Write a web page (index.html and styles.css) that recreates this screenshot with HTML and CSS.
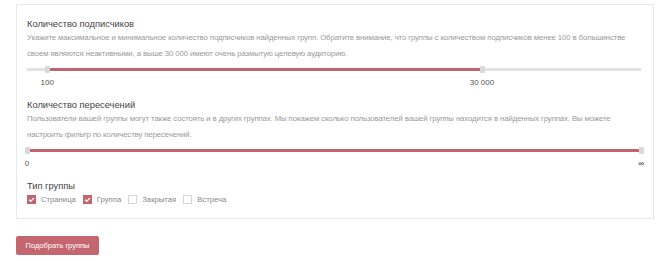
FILE: index.html
```html
<!DOCTYPE html>
<html lang="ru">

<head>
  <meta charset="UTF-8">
  <title>Подбор групп</title>
  <link rel="stylesheet" href="styles.css">
</head>

<body>

  <div class="panel">

    <div class="filter">
      <div class="filter__title">Количество подписчиков</div>
      <div class="filter__hint">Укажите максимальное и минимальное количество подписчиков найденных групп. Обратите внимание, что группы с количеством подписчиков менее 100 в большинстве своем являются неактивными, а выше 30 000 имеют очень размытую целевую аудиторию.</div>
      <div class="slider">
        <div class="slider__track">
          <div class="slider__fill" style="left: 3.3%; width: 70.8%;"></div>
        </div>
        <span class="slider__handle" style="left: 3.3%;"></span>
        <span class="slider__handle" style="left: 74.1%;"></span>
      </div>
      <div class="slider__labels">
        <span style="left: 3.3%;">100</span>
        <span style="left: 74.1%;">30 000</span>
      </div>
    </div>

    <div class="filter">
      <div class="filter__title">Количество пересечений</div>
      <div class="filter__hint">Пользователи вашей группы могут также состоять и в других группах. Мы покажем сколько пользователей вашей группы находится в найденных группах. Вы можете настроить фильтр по количеству пересечений.</div>
      <div class="slider">
        <div class="slider__track">
          <div class="slider__fill" style="left: 0; width: 100%;"></div>
        </div>
        <span class="slider__handle" style="left: 0;"></span>
        <span class="slider__handle" style="left: 100%;"></span>
      </div>
      <div class="slider__labels">
        <span style="left: 0;">0</span>
        <span class="inf" style="left: 100%;">&infin;</span>
      </div>
    </div>

    <div class="filter">
      <div class="filter__title">Тип группы</div>
      <div class="types">
        <label class="type"><span class="check checked"><svg viewBox="0 0 10 10" width="9" height="9"><path d="M2.3 5.2 L4.2 7 L7.8 3.2" fill="none" stroke="#fff" stroke-width="1.4"/></svg></span>Страница</label>
        <label class="type"><span class="check checked"><svg viewBox="0 0 10 10" width="9" height="9"><path d="M2.3 5.2 L4.2 7 L7.8 3.2" fill="none" stroke="#fff" stroke-width="1.4"/></svg></span>Группа</label>
        <label class="type"><span class="check"></span>Закрытая</label>
        <label class="type"><span class="check"></span>Встреча</label>
      </div>
    </div>

  </div>

  <button class="btn">Подобрать группы</button>

</body>

</html>
```

FILE: styles.css
```css
body {
  margin: 0;
  padding: 4px 16px 0;
  background-color: #fff;
  font-family: "Liberation Sans", Arial, sans-serif;
  color: #444;
}

.panel {
  border: 1px solid #e8e8e8;
  padding: 13px 12px 12px 10px;
}

.filter {
  margin-bottom: 10px;
}

.filter:last-child {
  margin-bottom: 0;
}

.filter__title {
  font-size: 9.3px;
  line-height: 12px;
  color: #444;
}

.filter__hint {
  font-size: 7.8px;
  letter-spacing: -0.12px;
  line-height: 15.5px;
  color: #9a9a9a;
}

.slider {
  position: relative;
  height: 10px;
  margin-top: 4px;
}

.slider__track {
  position: relative;
  top: 3px;
  height: 3px;
  background-color: #e2e2e2;
}

.slider__fill {
  position: absolute;
  top: 0;
  height: 3px;
  background-color: #c2646d;
}

.slider__handle {
  position: absolute;
  top: 1px;
  width: 5px;
  height: 7px;
  margin-left: -2px;
  background-color: #d9d9d9;
  border-radius: 1px;
}

.slider__labels {
  position: relative;
  height: 13px;
  margin-top: 1px;
  font-size: 8px;
  line-height: 13px;
  color: #555;
}

.slider__labels span {
  position: absolute;
  top: 0;
  transform: translateX(-50%);
  white-space: nowrap;
}

.slider__labels .inf {
  font-size: 8px;
  font-weight: bold;
}

.types {
  display: flex;
  align-items: center;
  gap: 7px;
  margin-top: 1px;
  height: 13px;
  font-size: 7.7px;
  color: #888;
}

.type {
  display: flex;
  align-items: center;
  gap: 5px;
}

.check {
  display: inline-block;
  box-sizing: border-box;
  width: 9px;
  height: 9px;
  border: 1px solid #d6d6d6;
  background-color: #fff;
}

.check svg {
  display: block;
  margin: -1px;
}

.check.checked {
  border-color: #c2646d;
  background-color: #c2646d;
}

.btn {
  display: block;
  margin-top: 17px;
  width: 83px;
  height: 19px;
  padding: 0;
  border: 0;
  border-radius: 2px;
  background-color: #c4666f;
  color: #fff;
  font-family: inherit;
  font-size: 7.5px;
}
```
